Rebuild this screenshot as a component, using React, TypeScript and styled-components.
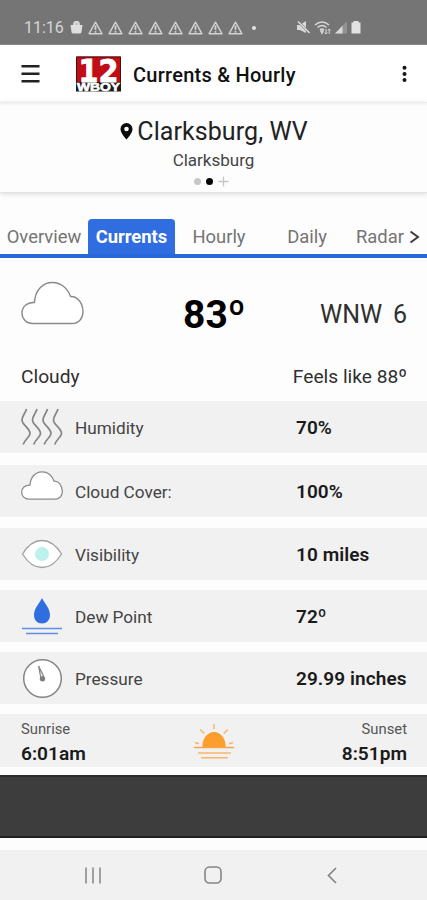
import React from "react";
import styled, { createGlobalStyle } from "styled-components";

const GlobalStyle = createGlobalStyle`
  *, *::before, *::after { box-sizing: border-box; }
  html, body { margin: 0; padding: 0; background: #fdfdfd; overflow: hidden; }
  svg { display: block; flex: none; }
`;

const Screen = styled.div`
  display: flex;
  flex-direction: column;
  width: 427px;
  height: 900px;
  overflow: hidden;
  background: #fdfdfd;
  color: #1c1c1c;
  font-family: Roboto, "Liberation Sans", sans-serif;
`;

const StatusBar = styled.header`
  flex: none;
  display: flex;
  align-items: center;
  height: 45px;
  padding: 11px 66px 0 24px;
  background: #757575;
  border-bottom: 1px solid #8a8a8a;
  color: #d6d6d6;
`;

const Clock = styled.span`
  width: 46px;
  font-size: 16px;
  line-height: 20px;
`;

const Alerts = styled.div`
  display: flex;
  gap: 5px;
  margin-left: 5px;
`;

const Dot = styled.span<{ $size: number; $color: string }>`
  flex: none;
  width: ${(p) => p.$size}px;
  height: ${(p) => p.$size}px;
  border-radius: 50%;
  background: ${(p) => p.$color};
`;

const MoreDot = styled(Dot)`
  margin-left: 9px;
`;

const Signals = styled.div`
  display: flex;
  align-items: center;
  gap: 4px;
  margin-left: auto;
`;

const AppBar = styled.div`
  flex: none;
  display: flex;
  align-items: center;
  height: 57px;
  padding: 0 20px 0 21px;
  background: #fff;
`;

const IconButton = styled.button`
  padding: 0;
  border: 0;
  background: none;
  color: inherit;
`;

const Logo = styled.svg`
  margin: 0 12px 0 36px;
  overflow: visible;
`;

const Title = styled.h1`
  flex: 1;
  margin: 0;
  font-size: 20px;
  font-weight: 500;
  line-height: 24px;
  letter-spacing: 0.26px;
  padding-top: 2px;
  color: #111;
`;

const Location = styled.section`
  flex: none;
  display: flex;
  flex-direction: column;
  align-items: center;
  height: 91px;
  padding-top: 14px;
  background: linear-gradient(#e9e9e9 0, #f6f6f6 2px, #fdfdfd 4px);
  border-bottom: 1px solid #e2e2e2;
  box-shadow: 0 1px 5px rgba(0, 0, 0, 0.14);
`;

const City = styled.div`
  display: flex;
  align-items: center;
  gap: 4px;
  height: 32px;
  padding-left: 1px;
  font-size: 25px;
  line-height: 32px;
  letter-spacing: 0.07px;
  color: #222;
`;

const Station = styled.div`
  margin-top: 2px;
  font-size: 17px;
  line-height: 20px;
  color: #444;
`;

const Pager = styled.div`
  display: flex;
  align-items: center;
  gap: 5px;
  height: 10px;
  margin-top: 6px;
  padding-right: 4px;
`;

const Tabs = styled.nav`
  flex: none;
  display: grid;
  grid-template-columns: 88px 87px 88px 88px 58px 12px;
  align-items: end;
  height: 65px;
  border-bottom: 4px solid #2868d8;
`;

const Tab = styled.a<{ $active?: boolean }>`
  height: 35px;
  border-radius: 4px 4px 0 0;
  background: ${(p) => (p.$active ? "#2f6de0" : "none")};
  color: ${(p) => (p.$active ? "#fff" : "#747474")};
  font-size: 18.4px;
  font-weight: ${(p) => (p.$active ? 700 : 400)};
  line-height: 35px;
  text-align: center;
  white-space: nowrap;
`;

const NextTabs = styled.span`
  display: flex;
  align-items: center;
  height: 35px;
`;

const Conditions = styled.section`
  flex: none;
  height: 143px;
  padding: 22px 20px 0 21px;
`;

const Reading = styled.div`
  display: grid;
  grid-template-columns: 63px 1fr 87px;
  height: 50px;
`;

const Temperature = styled.div`
  padding-top: 11px;
  padding-left: 99px;
  font-size: 39px;
  font-weight: 700;
  line-height: 48px;
  color: #000;
`;

const Wind = styled.div`
  display: flex;
  justify-content: space-between;
  padding-top: 20px;
  font-size: 25px;
  line-height: 30px;
  color: #303030;
`;

const Summary = styled.div`
  display: flex;
  justify-content: space-between;
  margin-top: 35px;
  font-size: 19.2px;
  line-height: 24px;
  color: #303030;
`;

const Metrics = styled.section`
  flex: none;
  display: grid;
  grid-template-rows: 64px 63px 62px 62px 62px 53px;
  height: 374px;
`;

const Metric = styled.div`
  display: grid;
  grid-template-columns: 54px 221px 1fr;
  align-items: center;
  height: 52px;
  padding: 2px 0 0 21px;
  background: #f1f1f1;
`;

const MetricIcon = styled.span<{ $raise?: number }>`
  margin-top: -2px;
  padding-bottom: ${(p) => (p.$raise ?? 0) * 2}px;
`;

const MetricName = styled.span`
  font-size: 17.2px;
  line-height: 22px;
  color: #444;
`;

const MetricValue = styled.span`
  font-size: 19px;
  font-weight: 600;
  line-height: 22px;
  letter-spacing: 0.08px;
  color: #1a1a1a;
`;

const SunRow = styled.div`
  display: grid;
  grid-template-columns: 1fr 42px 1fr;
  padding: 4px 20px 0 21px;
  background: #f1f1f1;
`;

const SunTime = styled.div<{ $align: "left" | "right" }>`
  text-align: ${(p) => p.$align};
`;

const SunIcon = styled.div`
  padding-top: 5px;
`;

const SunLabel = styled.div`
  font-size: 14.8px;
  line-height: 22px;
  color: #555;
`;

const SunValue = styled.div`
  margin-top: 2px;
  font-size: 19.1px;
  font-weight: 600;
  line-height: 24px;
  color: #1a1a1a;
`;

const AdBanner = styled.div`
  flex: none;
  height: 63px;
  background: #3d3d3d;
  border-top: 2px solid #2d2d2d;
  border-bottom: 2px solid #202020;
`;

const NavBar = styled.footer`
  flex: none;
  display: grid;
  grid-template-columns: 119.5px 119.5px 119.5px;
  justify-content: center;
  place-items: center;
  height: 50px;
  margin-top: 12px;
  padding-right: 2px;
  background: #f1f1f1;
`;

const Warning = () => (
  <svg width="15" height="14" viewBox="0 0 15 14" fill="none" stroke="#d2d2d2">
    <path d="M7.5 1.2 14 12.8H1Z" strokeWidth="1.4" strokeLinejoin="round" />
    <path d="M7.5 4.5V9M7.5 10v1.7" strokeWidth="1.7" />
  </svg>
);

const Cloud = ({ width, height, line }: { width: number; height: number; line: number }) => (
  <svg width={width} height={height} viewBox="0 0 63 43" fill="#fff" stroke="#8b8b8b" strokeWidth={line}>
    <path
      d="M11.5 42H51C57.5 42 62 37 62 30.500C62 21 56 14.500 49.500 15C46.500 6.500 39.500 1 31.500 1C21.500 1 14 9 13.500 21C6 20.500 1 25.500 1 31.500C1 37.500 5.500 42 11.500 42Z"
      strokeLinejoin="round"
    />
  </svg>
);

const Humidity = () => (
  <svg width="42" height="38" viewBox="0 0 42 38" fill="none" stroke="#858585" strokeWidth="1.7">
    {[0, 10.5, 21, 31.5].map((x) => (
      <path key={x} transform={`translate(${x} 0)`} d="M5.500 1C4.500 5 1 8 1 12C1 17 9 20 9 25.500C9 29 4 31 2.200 36.500" />
    ))}
  </svg>
);

const Eye = () => (
  <svg width="42" height="30" viewBox="0 0 42 30">
    <path d="M1.500 15C7 6 13 1.500 21 1.500S35 6 40.500 15C35 24 29 28.500 21 28.500S7 24 1.500 15Z" fill="#fff" stroke="#a0a0a0" strokeWidth="1.3" />
    <circle cx="21" cy="15" r="7" fill="#bdf1ed" />
  </svg>
);

const Dew = () => (
  <svg width="42" height="38" viewBox="0 0 42 38">
    <path d="M21 1C24 7 29 11.500 29 18C29 23 25.500 26.500 21 26.500S13 23 13 18C13 11.500 18 7 21 1Z" fill="#2f6de0" />
    <path d="M1 31.500H41M5 36.500H37" stroke="#5f8fe2" strokeWidth="1.7" />
  </svg>
);

const Gauge = () => (
  <svg width="42" height="40" viewBox="0 0 42 40">
    <circle cx="21.500" cy="20.500" r="18.800" fill="#fff" stroke="#858585" strokeWidth="1.500" />
    <path d="M17.600 8 22.800 18.700M17.600 8 19.800 19.500" stroke="#858585" strokeWidth="1.300" />
    <circle cx="21.500" cy="20.800" r="2.700" fill="#7e7e7e" />
  </svg>
);

const Sun = () => (
  <svg width="42" height="38" viewBox="0 0 42 38">
    <path d="M9.500 25C8.500 17 13.500 9 21 9S33.500 17 32.500 25Z" fill="#fb9e2d" />
    <g stroke="#f8b56b" strokeWidth="1.5">
      <path d="M21 1V6M7.200 6.500l4 4M34.800 6.500l-4 4M2 19.500l4 1.300M40 19.500l-4 1.300" />
      <path d="M1 24.600H41" stroke="#f8a443" />
      <path d="M5 30H38M8 34.800H35" />
    </g>
  </svg>
);

const metrics = [
  { name: "Humidity", value: "70%", icon: <Humidity /> },
  { name: "Cloud Cover:", value: "100%", icon: <Cloud width={42} height={29} line={1.9} />, raise: 6 },
  { name: "Visibility", value: "10 miles", icon: <Eye /> },
  { name: "Dew Point", value: "72º", icon: <Dew /> },
  { name: "Pressure", value: "29.99 inches", icon: <Gauge /> },
];

export default function App() {
  return (
    <>
      <GlobalStyle />
      <Screen>
        <StatusBar>
          <Clock>11:16</Clock>
          <svg width="13" height="13" viewBox="0 0 13 13">
            <path d="M4 5V3A2.500 2.300 0 0 1 9 3V5" fill="#c4c4c4" stroke="#dedede" strokeWidth="1.700" />
            <path d="M0.500 4H12.500L11.500 11Q11.300 12.500 9.800 12.500H3.200Q1.700 12.500 1.500 11Z" fill="#dedede" />
          </svg>
          <Alerts>
            {Array.from({ length: 8 }, (_, i) => (
              <Warning key={i} />
            ))}
          </Alerts>
          <MoreDot $size={4} $color="#e2e2e2" />
          <Signals>
            <svg width="13" height="13" viewBox="0 0 13 13">
              <path d="M0 4H3L9 0V12L3 9H0Z" fill="#d8d8d8" />
              <path d="M1 0.500 12.500 12" stroke="#757575" strokeWidth="2.400" />
              <path d="M1 0.500 12.500 12" stroke="#d8d8d8" strokeWidth="1.600" />
            </svg>
            <svg width="17" height="14" viewBox="0 0 17 14" fill="none" stroke="#d8d8d8" strokeWidth="1.500">
              <path d="M1 4Q8 -2 15 4M3.500 6.500Q8 2.500 12.500 6.500M6 9Q8 7 10 9" />
              <path d="M7 10H9L8 12Z" fill="#d8d8d8" />
              <path d="M12 8V13M10.500 11.500 12 13l1.500-1.500M15.200 13V8M13.800 9.500l1.400-1.500 1.400 1.500" strokeWidth="1" />
            </svg>
            <svg width="12" height="13" viewBox="0 0 12 13">
              <path d="M12 0V12.500H0Z" fill="#929292" />
              <path d="M7.500 4.700V12.500H0Z" fill="#d8d8d8" />
            </svg>
            <svg width="10" height="13" viewBox="0 0 10 13">
              <path d="M2.500 0H7.500V1.500H9.500V12.500H0.500V1.500H2.500Z" fill="#e2e2e2" />
            </svg>
          </Signals>
        </StatusBar>

        <AppBar>
          <IconButton aria-label="Menu">
            <svg width="19" height="19" viewBox="0 0 19 19" stroke="#222" strokeWidth="2.600">
              <path d="M0.500 2.200H18.500M0.500 9.700H18.500M0.500 17.200H18.500" />
            </svg>
          </IconButton>
          <Logo width="45" height="36" viewBox="0 0 45 36">
            <rect x="0" y="0.500" width="45" height="26" fill="#c00d16" />
            <rect x="0" y="26" width="45" height="9.500" fill="#1a1a1a" />
            <path d="M0.500 26V1H44.500V26" fill="none" stroke="#3e1015" />
            <text x="22.500" y="25.500" textAnchor="middle" textLength="40" lengthAdjust="spacingAndGlyphs" fill="#fff" stroke="#fff" strokeWidth="0.800" fontFamily="DejaVu Sans, sans-serif" fontWeight="700" fontSize="32">
              12
            </text>
            <text x="22.500" y="34.800" textAnchor="middle" textLength="43" lengthAdjust="spacingAndGlyphs" fill="#fff" stroke="#fff" strokeWidth="0.600" fontFamily="Liberation Sans, sans-serif" fontWeight="700" fontSize="10.600">
              WBOY
            </text>
          </Logo>
          <Title>Currents &amp; Hourly</Title>
          <IconButton aria-label="More options">
            <svg width="5" height="18" viewBox="0 0 5 18" fill="#151515">
              <circle cx="2.500" cy="2.700" r="2" />
              <circle cx="2.500" cy="8.900" r="2" />
              <circle cx="2.500" cy="15.100" r="2" />
            </svg>
          </IconButton>
        </AppBar>

        <Location>
          <City>
            <svg width="13" height="18" viewBox="0 0 13 18">
              <path d="M6.500 0A6 6 0 0 0 0.500 6C0.500 10.500 6.500 16.500 6.500 16.500S12.500 10.500 12.500 6A6 6 0 0 0 6.500 0ZM6.500 8.300A2.300 2.300 0 1 1 6.500 3.700A2.300 2.300 0 0 1 6.500 8.300Z" fill="#0b0b0b" />
            </svg>
            Clarksburg, WV
          </City>
          <Station>Clarksburg</Station>
          <Pager>
            <Dot $size={7} $color="#c8c8c8" />
            <Dot $size={7} $color="#050505" />
            <svg width="11" height="11" viewBox="0 0 11 11" stroke="#c6c6c6" strokeWidth="1.300">
              <path d="M5.500 0.500V10.500M0.500 5.500H10.500" />
            </svg>
          </Pager>
        </Location>

        <Tabs>
          <Tab>Overview</Tab>
          <Tab $active>Currents</Tab>
          <Tab>Hourly</Tab>
          <Tab>Daily</Tab>
          <Tab>Radar</Tab>
          <NextTabs>
            <svg width="11" height="14" viewBox="0 0 11 14" fill="none" stroke="#3c3c3c" strokeWidth="2">
              <path d="M1.500 1.500 9 7 1.500 12.500" />
            </svg>
          </NextTabs>
        </Tabs>

        <Conditions>
          <Reading>
            <Cloud width={63} height={46} line={1.4} />
            <Temperature>83º</Temperature>
            <Wind>
              <span>WNW</span>
              <span>6</span>
            </Wind>
          </Reading>
          <Summary>
            <span>Cloudy</span>
            <span>Feels like 88º</span>
          </Summary>
        </Conditions>

        <Metrics>
          {metrics.map((m) => (
            <Metric key={m.name}>
              <MetricIcon $raise={m.raise}>{m.icon}</MetricIcon>
              <MetricName>{m.name}</MetricName>
              <MetricValue>{m.value}</MetricValue>
            </Metric>
          ))}
          <SunRow>
            <SunTime $align="left">
              <SunLabel>Sunrise</SunLabel>
              <SunValue>6:01am</SunValue>
            </SunTime>
            <SunIcon>
              <Sun />
            </SunIcon>
            <SunTime $align="right">
              <SunLabel>Sunset</SunLabel>
              <SunValue>8:51pm</SunValue>
            </SunTime>
          </SunRow>
        </Metrics>

        <AdBanner />

        <NavBar>
          <svg width="16" height="17" viewBox="0 0 16 17" stroke="#858585" strokeWidth="1.500">
            <path d="M1 0.500V16.500M8 0.500V16.500M15 0.500V16.500" />
          </svg>
          <svg width="18" height="18" viewBox="0 0 18 18" fill="none" stroke="#858585" strokeWidth="1.600">
            <rect x="1" y="1" width="16" height="16" rx="4.500" />
          </svg>
          <svg width="10" height="17" viewBox="0 0 10 17" fill="none" stroke="#858585" strokeWidth="1.700">
            <path d="M9 1 1.500 8.500 9 16" />
          </svg>
        </NavBar>
      </Screen>
    </>
  );
}
